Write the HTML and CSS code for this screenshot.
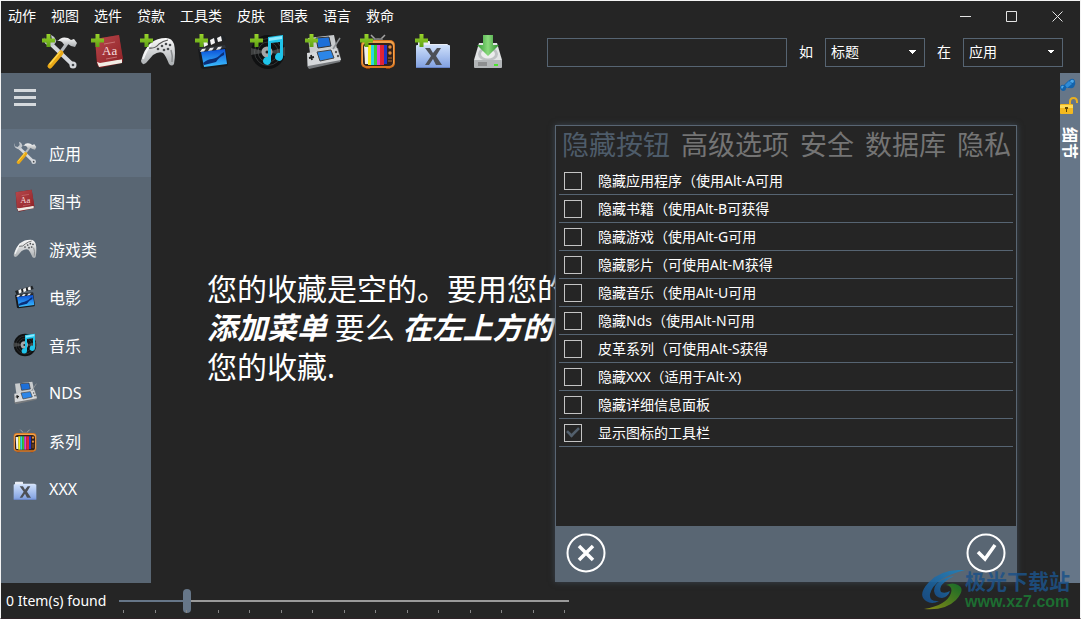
FILE: index.html
```html
<!DOCTYPE html>
<html lang="zh">
<head>
    <meta charset="utf-8">
    <title>收藏</title>
    <link rel="stylesheet" href="styles.css">
</head>
<body>
    <!-- icon set -->
    <svg class="sprite" width="0" height="0">
        <defs>
            <linearGradient id="steel" x1="0" y1="0" x2="0" y2="1">
                <stop offset="0" stop-color="#fafafa"/><stop offset="1" stop-color="#a9adb0"/>
            </linearGradient>
            <linearGradient id="red" x1="0" y1="0" x2="1" y2="1">
                <stop offset="0" stop-color="#b8484c"/><stop offset="1" stop-color="#8f2227"/>
            </linearGradient>
            <linearGradient id="sky" x1="0" y1="0" x2="0" y2="1">
                <stop offset="0" stop-color="#0b50d8"/><stop offset="1" stop-color="#3cc0ff"/>
            </linearGradient>
            <linearGradient id="folder" x1="0" y1="0" x2="0" y2="1">
                <stop offset="0" stop-color="#cfe0fb"/><stop offset="1" stop-color="#7f9fe0"/>
            </linearGradient>
            <linearGradient id="green" x1="0" y1="0" x2="0" y2="1">
                <stop offset="0" stop-color="#9ad42c"/><stop offset="1" stop-color="#5da113"/>
            </linearGradient>
            <linearGradient id="arrow" x1="0" y1="0" x2="1" y2="0">
                <stop offset="0" stop-color="#2f9632"/><stop offset=".5" stop-color="#8ada7c"/><stop offset="1" stop-color="#2a8a2c"/>
            </linearGradient>
            <linearGradient id="swirlBlue" x1="0" y1="1" x2="1" y2="0">
                <stop offset="0" stop-color="#184f8e"/><stop offset="1" stop-color="#1d83c0"/>
            </linearGradient>
            <linearGradient id="swirlGreen" x1="0" y1="1" x2="1" y2="0">
                <stop offset="0" stop-color="#9a9a12"/><stop offset="1" stop-color="#12782a"/>
            </linearGradient>
        </defs>
        <symbol id="plus" viewBox="0 0 13 13">
            <path d="M4.500 0h4v4.500H13v4H8.500V13h-4V8.500H0v-4h4.500z" fill="url(#green)"/>
        </symbol>
        <symbol id="tools" viewBox="0 0 36 36">
            <path d="M10 11L31 31" stroke="#d5d8dc" stroke-width="4" stroke-linecap="round"/>
            <circle cx="31" cy="31" r="3.500" fill="#d5d8dc"/>
            <circle cx="31" cy="31" r="1.300" fill="#44484c"/>
            <path d="M2 3q-1 6 3 8 3 2 6 1l3-4q0-5-5-7l1 5-3 3-4-1z" fill="#c3c8cd"/>
            <path d="M18 19L26 8" stroke="#b6babe" stroke-width="3"/>
            <path d="M16 7q3-5 10-3l3 2 3-1 3 4-2 4-4-1-3-2-3 2-3-4q-3-2-7-1z" fill="url(#steel)"/>
            <path d="M8 32L19 19" stroke="#e9a817" stroke-width="5" stroke-linecap="round"/>
            <path d="M8 30L18 18" stroke="#ffd84a" stroke-width="1.500" stroke-linecap="round"/>
        </symbol>
        <symbol id="book" viewBox="0 0 36 36">
            <path d="M4 5L28 1l4 26-1 2-22 5-3-3z" fill="#7b1c20"/>
            <path d="M6 28l25-3v4L8 33z" fill="#f1ece4"/>
            <path d="M4 5L28 1l4 24-23 4-3-1z" fill="url(#red)"/>
            <path d="M13 10l11-2M15 25l11-2" stroke="#d99" stroke-width=".6"/>
        </symbol>
        <symbol id="gamepad" viewBox="0 0 36 36">
            <path d="M1 27Q4 15 11 9 17 4 26 4q6 0 8 6 2 8 0 20-2 3-5 0-3-8-6-11-4-2-10 2L6 29q-4 3-5-2z" fill="url(#steel)"/>
            <path d="M11 10Q6 16 3 25" stroke="#fff" stroke-width="2" fill="none" opacity=".8"/>
            <path d="M9 14q6 1 10-4 4-3 9-4" stroke="#555" stroke-width="1.200" fill="none"/>
            <path d="M31 16q2 6 1 12" stroke="#8b8e90" stroke-width="1.500" fill="none"/>
            <g fill="#484b4e"><circle cx="22" cy="12" r="1.300"/><circle cx="26" cy="10" r="1.300"/><circle cx="30" cy="11" r="1.300"/><circle cx="24" cy="16" r="1.300"/><circle cx="28" cy="15" r="1.300"/><circle cx="18" cy="15" r="1.300"/></g>
        </symbol>
        <symbol id="clap" viewBox="0 0 36 36">
            <path d="M3 15L30 12l3 18-1 2L8 35l-2-1z" fill="#17191c"/>
            <path d="M3 9L29 1l2 5L5 14z" fill="#202326"/>
            <path d="M8 8l4-2 1 5-4 2zM15 6l4-2 1 5-4 2zM22 4l4-2 1 5-4 1z" fill="#f4f4f4"/>
            <path d="M4 14l26-3 1 3-26 4z" fill="#303439"/>
            <path d="M7 15l4-.5-2 3-4 .5zM15 14l4-.5-2 3-4 .5zM23 13l4-.5-2 3-4 .5z" fill="#e8e8e8"/>
            <path d="M6 18l24-3 2 15-23 3z" fill="url(#sky)"/>
            <path d="M8 29q5-4 9-4 6-1 9-5l3-2v3q-5 2-8 7l-12 3z" fill="#0a2e78"/>
        </symbol>
        <symbol id="vinyl" viewBox="0 0 36 36">
            <circle cx="18" cy="18" r="17" fill="#101112"/>
            <circle cx="18" cy="18" r="13.500" fill="none" stroke="#353738" stroke-width="1"/>
            <circle cx="18" cy="18" r="10" fill="none" stroke="#353738" stroke-width="1"/>
            <path d="M18 18L1 14v7zM18 18l17-5v9z" fill="#77797b" opacity=".45"/>
            <circle cx="17" cy="18" r="5.500" fill="#a4a7a9"/>
            <circle cx="17" cy="18" r="1.500" fill="#222"/>
            <path d="M18 3l15-2v22a4 4 0 1 1-3-4V8l-9 1v18a4 4 0 1 1-3-4z" fill="#1fc4ea"/>
            <path d="M19 4l13-2v3l-13 2z" fill="#8deaff"/>
        </symbol>
        <symbol id="nds" viewBox="0 0 36 36">
            <path d="M3 4L29 1l3 14L5 19z" fill="#c9ccce"/>
            <path d="M11 4l13-1 2 9-13 2z" fill="#1d6fd8" stroke="#333" stroke-width="1"/>
            <path d="M2 20L33 14l3 11-1 3L4 35l-2-3z" fill="#777a7d"/>
            <path d="M2 19L32 14l4 12L3 32z" fill="#d6d8da"/>
            <path d="M12 18l14-2 3 8-14 3z" fill="#2c86e8" stroke="#444" stroke-width="1"/>
            <path d="M4 24l5-1M6 21l1 5" stroke="#222" stroke-width="1.800"/>
            <path d="M28 15L35 4" stroke="#8c9093" stroke-width="1.500"/>
            <circle cx="31" cy="18" r="1.200" fill="#555"/><circle cx="33" cy="22" r="1.200" fill="#555"/>
        </symbol>
        <symbol id="tv" viewBox="0 0 36 36">
            <path d="M11 1l7 7 7-7" stroke="#a5a5a5" stroke-width="1.500" fill="none"/>
            <ellipse cx="18" cy="6" rx="5" ry="2" fill="#777"/>
            <path d="M5 32h5v3H6zM26 32h5l-1 3h-4z" fill="#8a3b08"/>
            <rect x="1" y="6" width="34" height="28" rx="5" fill="#d9741f"/>
            <rect x="2" y="7" width="32" height="25" rx="4" fill="#f0a34e"/>
            <rect x="3" y="9" width="30" height="23" rx="4" fill="#33211a"/>
            <path d="M4 12h4v18H5z" fill="#eee"/>
            <path d="M8 11h3v20H8z" fill="#f3ed18"/><path d="M11 11h3v20h-3z" fill="#29d5e8"/>
            <path d="M14 11h3v20h-3z" fill="#35cc34"/><path d="M17 11h3v20h-3z" fill="#e23bd6"/>
            <path d="M20 11h4v20h-4z" fill="#e22335"/><path d="M24 11h3v19h-3z" fill="#2334c4"/>
            <circle cx="30" cy="13" r="1.700" fill="#e68c3a"/><circle cx="30" cy="19" r="1.700" fill="#e68c3a"/>
            <path d="M28 24h4M28 27h4" stroke="#b56a2c"/>
        </symbol>
        <symbol id="xfolder" viewBox="0 0 36 36">
            <path d="M3 12V8q0-1 1-1h10q1 0 1 1v2h17q1 0 1 1v4z" fill="#e9edf5"/>
            <rect x="1" y="11" width="34" height="23" rx="1" fill="url(#folder)"/>
            <path d="M1 33.500h34" stroke="#6682c4"/>
            <path d="M10 14h5l3 5 4-5h4l-5 8 6 9h-6l-3-6-4 6h-4l6-9z" fill="#4d5056"/>
        </symbol>
        <symbol id="drive" viewBox="0 0 36 36">
            <path d="M9 9h18l5 17H4z" fill="#e2e4e5"/>
            <ellipse cx="18" cy="20" rx="10" ry="7" fill="#bfc2c4"/>
            <ellipse cx="18" cy="20" rx="7" ry="4.500" fill="#eceded"/>
            <path d="M4 26h28v7q0 1-1 1H5q-1 0-1-1z" fill="#b3b6b8"/>
            <path d="M8 29h9M8 31h9" stroke="#666"/>
            <rect x="24" y="30" width="4" height="2" fill="#4be32c"/>
            <path d="M13 1h10v10h6L18 22 7 11h6z" fill="url(#arrow)"/>
        </symbol>
    </svg>

    <div class="window">
        <header class="titlebar">
            <nav class="menu">
                <a href="#">动作</a>
                <a href="#">视图</a>
                <a href="#">选件</a>
                <a href="#">贷款</a>
                <a href="#">工具类</a>
                <a href="#">皮肤</a>
                <a href="#">图表</a>
                <a href="#">语言</a>
                <a href="#">救命</a>
            </nav>
            <div class="window-buttons">
                <button aria-label="最小化"><svg width="11" height="11"><path d="M0 5.500h11"/></svg></button>
                <button aria-label="最大化"><svg width="11" height="11"><path d="M.5.5h10v10H.5z"/></svg></button>
                <button aria-label="关闭"><svg width="11" height="11"><path d="M.5.5l10 10M10.500.5l-10 10"/></svg></button>
            </div>
        </header>

        <div class="toolbar">
            <div class="tool-group tight">
                <button aria-label="添加应用"><svg class="icon"><use href="#tools"/></svg><svg class="plus"><use href="#plus"/></svg></button>
                <button aria-label="添加图书"><svg class="icon" viewBox="0 0 36 36"><use href="#book"/><text x="11" y="21" class="book-letters">Aa</text></svg><svg class="plus"><use href="#plus"/></svg></button>
                <button aria-label="添加游戏"><svg class="icon"><use href="#gamepad"/></svg><svg class="plus"><use href="#plus"/></svg></button>
            </div>
            <div class="tool-group">
                <button aria-label="添加电影"><svg class="icon"><use href="#clap"/></svg><svg class="plus"><use href="#plus"/></svg></button>
                <button aria-label="添加音乐"><svg class="icon"><use href="#vinyl"/></svg><svg class="plus"><use href="#plus"/></svg></button>
                <button aria-label="添加NDS"><svg class="icon"><use href="#nds"/></svg><svg class="plus"><use href="#plus"/></svg></button>
                <button aria-label="添加系列"><svg class="icon"><use href="#tv"/></svg><svg class="plus"><use href="#plus"/></svg></button>
                <button aria-label="添加XXX"><svg class="icon"><use href="#xfolder"/></svg><svg class="plus"><use href="#plus"/></svg></button>
                <button aria-label="保存"><svg class="icon"><use href="#drive"/></svg></button>
            </div>
            <form class="search">
                <input type="text" aria-label="搜索">
                <label for="field">如</label>
                <select id="field"><option>标题</option></select>
                <label for="scope">在</label>
                <select id="scope"><option>应用</option></select>
            </form>
        </div>

        <div class="content">
            <aside class="sidebar">
                <button class="burger" aria-label="菜单"><span></span><span></span><span></span></button>
                <nav>
                    <a class="active" href="#"><svg><use href="#tools"/></svg>应用</a>
                    <a href="#"><svg viewBox="0 0 36 36"><use href="#book"/><text x="11" y="21" class="book-letters">Aa</text></svg>图书</a>
                    <a href="#"><svg><use href="#gamepad"/></svg>游戏类</a>
                    <a href="#"><svg><use href="#clap"/></svg>电影</a>
                    <a href="#"><svg><use href="#vinyl"/></svg>音乐</a>
                    <a href="#"><svg><use href="#nds"/></svg>NDS</a>
                    <a href="#"><svg><use href="#tv"/></svg>系列</a>
                    <a href="#"><svg><use href="#xfolder"/></svg>XXX</a>
                </nav>
            </aside>

            <main class="empty">
                <p>您的收藏是空的。要用您的<br>
                    <b>添加菜单</b> 要么 <b>在左上方的</b><br>
                    您的收藏.</p>
            </main>

            <aside class="details">
                <button aria-label="固定">
                    <svg width="16" height="14" viewBox="0 0 16 14">
                        <path d="M8 3l3-2q3-1 4 2t-1 6q-2 2-4 1L6 10q0 3-3 3-3-1-3-4 1-3 4-2z" fill="#1463ab"/>
                        <path d="M5 7l4-4 3 3-5 4z" fill="#2f8bd6"/>
                        <path d="M11 2q2-1 3 1l-1 2-3-1zM1 9q1-2 3-1L2 11z" fill="#4fa8e8"/>
                    </svg>
                </button>
                <button aria-label="锁定">
                    <svg width="18" height="20" viewBox="0 0 18 20">
                        <path d="M10 9V6q0-4 3.500-4T17 6v1" fill="none" stroke="#e9b021" stroke-width="2"/>
                        <rect x="0" y="8" width="13" height="10" rx="1" fill="#f4b91e"/>
                        <path d="M0 9h13v3H0z" fill="#ffdb57"/>
                        <path d="M5 11h3v2H7v3H6v-3H5z" fill="#5e4708"/>
                    </svg>
                </button>
                <span class="details-label">细节</span>
            </aside>
        </div>

        <footer class="statusbar">
            <label for="zoom">0 Item(s) found</label>
            <div class="slider">
                <input id="zoom" type="range" min="0" max="14" value="2">
                <div class="ticks">
                    <i></i><i></i><i></i><i></i><i></i><i></i><i></i><i></i><i></i><i></i><i></i><i></i><i></i><i></i><i></i>
                </div>
            </div>
        </footer>
    </div>

    <section class="dialog" role="dialog" aria-label="选项">
        <div class="tabs">
            <button class="selected">隐藏按钮</button>
            <button>高级选项</button>
            <button>安全</button>
            <button>数据库</button>
            <button>隐私</button>
        </div>
        <div class="options">
            <label><input type="checkbox"><span>隐藏应用程序（使用Alt-A可用</span></label>
            <label><input type="checkbox"><span>隐藏书籍（使用Alt-B可获得</span></label>
            <label><input type="checkbox"><span>隐藏游戏（使用Alt-G可用</span></label>
            <label><input type="checkbox"><span>隐藏影片（可使用Alt-M获得</span></label>
            <label><input type="checkbox"><span>隐藏音乐（使用Alt-U可用</span></label>
            <label><input type="checkbox"><span>隐藏Nds（使用Alt-N可用</span></label>
            <label><input type="checkbox"><span>皮革系列（可使用Alt-S获得</span></label>
            <label><input type="checkbox"><span>隐藏XXX（适用于Alt-X)</span></label>
            <label><input type="checkbox"><span>隐藏详细信息面板</span></label>
            <label><input type="checkbox" checked><span>显示图标的工具栏</span></label>
        </div>
        <div class="dialog-footer">
            <button aria-label="取消">
                <svg width="40" height="40" viewBox="0 0 40 40"><circle cx="20" cy="20" r="18.500"/><path d="M13 13l14 14M27 13L13 27" stroke-width="3.500"/></svg>
            </button>
            <button aria-label="确定">
                <svg width="40" height="40" viewBox="0 0 40 40"><circle cx="20" cy="20" r="18.500"/><path d="M12 19l7 7 10-14" stroke-width="3.500"/></svg>
            </button>
        </div>
    </section>

    <div class="watermark">
        <svg width="44" height="40" viewBox="0 0 44 40">
            <path d="M44 0Q20-1 8 12-4 25 5 31q6 4 13 0-10 1-9-7Q13 8 44 0z" fill="url(#swirlBlue)"/>
            <path d="M33 6Q13 10 13 21q1 7 8 7 6-1 8-7-5 3-9 1-4-7 13-16z" fill="url(#swirlBlue)"/>
            <path d="M3 39q21 2 32-9 10-11 2-15-5-3-12 0 7 1 5 8-4 12-27 16z" fill="url(#swirlGreen)"/>
        </svg>
        <div>
            <strong>极光下载站</strong>
            <span>www.xz7.com</span>
        </div>
    </div>
</body>
</html>
```

FILE: styles.css
```css
* {
    margin: 0;
    padding: 0;
    box-sizing: border-box;
}

body {
    height: 100vh;
    overflow: hidden;
    background: #252525;
    color: #fff;
    font-family: "Noto Sans", "Noto Sans CJK SC", sans-serif;
    font-size: 14px;
}

button, input, select {
    font: inherit;
    color: inherit;
    background: none;
    border: none;
}

a {
    color: inherit;
    text-decoration: none;
}

svg {
    display: block;
}

.sprite {
    position: absolute;
}

.book-letters {
    font: 13px "Liberation Serif", serif;
    fill: #f6dede;
}

.window {
    height: 100%;
    display: flex;
    flex-direction: column;
    border: 1px solid #f4f4f4;
    border-bottom-color: #2d2226;
}

/* title bar */
.titlebar {
    height: 30px;
    display: flex;
    justify-content: space-between;
    align-items: center;
    padding-left: 7px;
}

.menu {
    display: flex;
    gap: 15px;
    padding-bottom: 3px;
}

.window-buttons {
    display: flex;
}

.window-buttons button {
    width: 46px;
    height: 30px;
    display: flex;
    justify-content: center;
    align-items: center;
}

.window-buttons path {
    fill: none;
    stroke: #e4e4e4;
}

/* toolbar */
.toolbar {
    height: 42px;
    display: flex;
    align-items: center;
    padding: 0 17px 0 41px;
}

.tool-group {
    display: flex;
    gap: 19px;
}

.tool-group.tight {
    gap: 13px;
    margin-right: 19px;
}

.tool-group button {
    position: relative;
    width: 36px;
    height: 36px;
}

.tool-group .icon {
    width: 36px;
    height: 36px;
}

.plus {
    position: absolute;
    top: 0;
    left: 0;
    width: 13px;
    height: 13px;
}

.search {
    margin-left: auto;
    display: flex;
    align-items: center;
    gap: 12px;
}

.search label {
    padding-bottom: 2px;
}

.search input, .search select {
    height: 29px;
    border: 1px solid #566472;
}

.search input {
    width: 240px;
    padding: 0 5px;
}

.search select {
    width: 100px;
    padding: 0 0 2px 5px;
    appearance: none;
    background:
        linear-gradient(to bottom left, #fff 50%, transparent 50%) 83px 11px / 4px 4px no-repeat,
        linear-gradient(to bottom right, #fff 50%, transparent 50%) 87px 11px / 4px 4px no-repeat;
}

/* content */
.content {
    flex: 1;
    min-height: 0;
    display: flex;
}

.sidebar {
    width: 150px;
    background: #596673;
}

.burger {
    height: 56px;
    padding: 0 13px 8px;
    display: flex;
    flex-direction: column;
    justify-content: center;
    gap: 4px;
}

.burger span {
    width: 22px;
    height: 3px;
    background: #d5d9dd;
}

.sidebar a {
    height: 48px;
    display: flex;
    align-items: center;
    gap: 12px;
    padding: 0 0 1px 12px;
    font-size: 16px;
}

.sidebar a.active {
    background: #617080;
}

.sidebar a svg {
    width: 24px;
    height: 24px;
}

.empty {
    flex: 1;
    min-width: 0;
    overflow: hidden;
    display: flex;
    align-items: center;
    padding: 0 0 2px 56px;
    white-space: nowrap;
    font-size: 30px;
    line-height: 39px;
}

.empty b {
    font-style: italic;
}

.details {
    width: 20px;
    display: flex;
    flex-direction: column;
    gap: 4px;
    padding-top: 5px;
    background: #667688;
}

.details-label {
    writing-mode: vertical-rl;
    text-orientation: sideways;
    margin-top: 7px;
    font-size: 16px;
    font-weight: bold;
    line-height: 20px;
}

/* status bar */
.statusbar {
    height: 35px;
    display: flex;
    align-items: center;
    gap: 13px;
    padding-left: 5px;
}

.slider {
    width: 450px;
    display: grid;
}

.slider input, .ticks {
    grid-area: 1 / 1;
}

.slider input {
    width: 100%;
    height: 24px;
    appearance: none;
}

.slider input::-webkit-slider-runnable-track {
    height: 2px;
    background: linear-gradient(to right, #667688 15%, #9a9a9a 15%);
}

.slider input::-webkit-slider-thumb {
    appearance: none;
    width: 8px;
    height: 24px;
    margin-top: -11px;
    border-radius: 4px;
    background: #667688;
}

.ticks {
    align-self: end;
    display: flex;
    justify-content: space-between;
    padding: 0 4px;
    pointer-events: none;
}

.ticks i {
    width: 1px;
    height: 3px;
    background: #858585;
}

/* options dialog */
.dialog {
    position: absolute;
    top: 125px;
    right: 64px;
    bottom: 37px;
    width: 462px;
    display: flex;
    flex-direction: column;
    background: #252525;
    border: 1px solid #596673;
    box-shadow: 0 0 6px #3c4650;
}

.tabs {
    height: 41px;
    display: flex;
    gap: 11px;
    padding-left: 6px;
}

.tabs button {
    height: 38px;
    font-size: 27px;
    line-height: 38px;
    white-space: nowrap;
    color: #747474;
}

.tabs .selected {
    color: #4e5c6a;
}

.options {
    flex: 1;
    padding: 0 3px;
}

.options label {
    height: 28px;
    display: flex;
    align-items: center;
    gap: 16px;
    padding-left: 5px;
    border-bottom: 1px solid #566472;
}

.options span {
    padding-bottom: 2px;
}

.options input {
    appearance: none;
    width: 18px;
    height: 18px;
    border: 1px solid #c4c4c4;
    display: grid;
    place-items: center;
}

.options input:checked::before {
    content: "";
    width: 11px;
    height: 6px;
    border: solid #53606d;
    border-width: 0 0 3px 3px;
    transform: translateY(-2px) rotate(-45deg) scale(.85);
}

.dialog-footer {
    display: flex;
    justify-content: space-between;
    padding: 7px 10px 8px;
    background: #596673;
}

.dialog-footer svg {
    fill: none;
    stroke: #fff;
    stroke-width: 2;
}

/* watermark */
.watermark {
    position: absolute;
    right: 11px;
    bottom: 8px;
    display: flex;
    align-items: center;
    opacity: .85;
}

.watermark strong, .watermark span {
    display: block;
}

.watermark strong {
    font-size: 21px;
    line-height: 24px;
    color: #1c5288;
}

.watermark span {
    font: bold 16px/18px "Liberation Sans", sans-serif;
    color: #1c7a34;
}
```
